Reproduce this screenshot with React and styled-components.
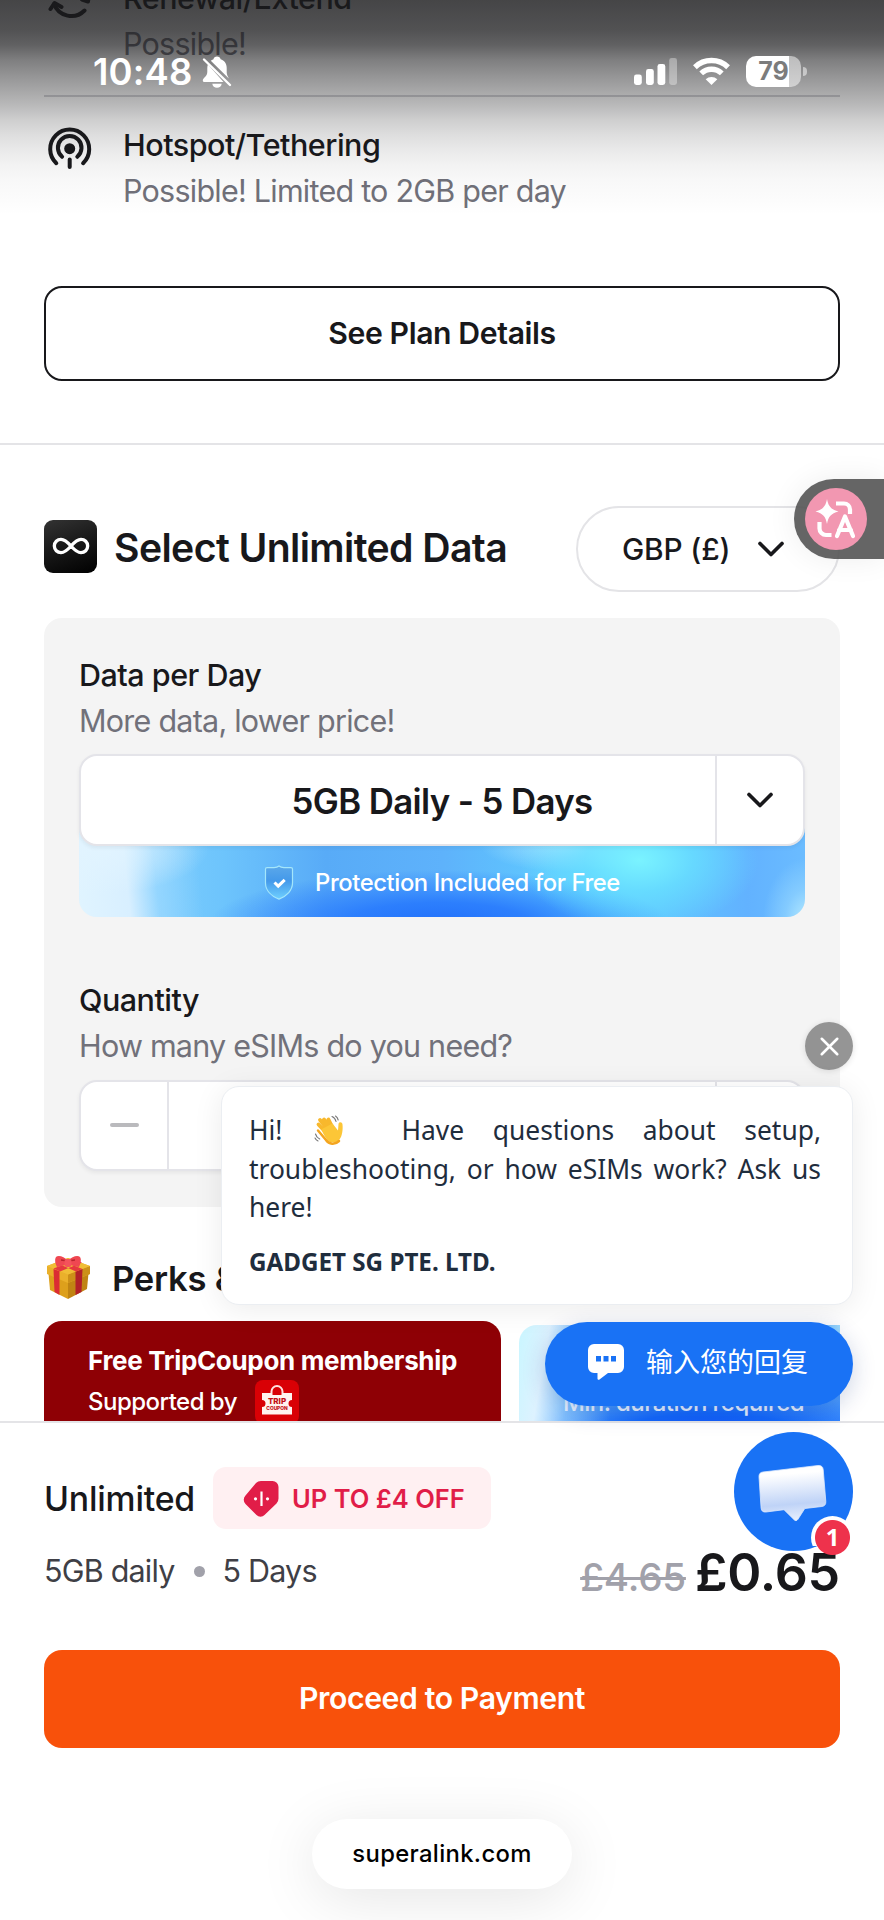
import React from 'react';
import styled, { createGlobalStyle } from 'styled-components';
import { ChevronDown, Infinity as InfinityIcon, X } from 'lucide-react';

const GlobalStyle = createGlobalStyle`
  *, *::before, *::after { box-sizing: border-box; }
  body {
    margin: 0;
    background: #fff;
    font-family: 'Inter', sans-serif;
    color: #18181b;
  }
  button { font-family: inherit; color: inherit; }
  svg { display: block; flex-shrink: 0; }
`;

const Page = styled.div`
  position: relative;
  width: 884px;
  height: 1920px;
  overflow: hidden;
  background: #fff;
`;

const Content = styled.main`
  height: 1421px;
  overflow: hidden;
`;

/* ---------- plan features ---------- */

const Features = styled.section`
  margin-top: -25px;
  padding: 0 44px 62px;
  border-bottom: 2px solid #e4e4e7;
`;

const Feature = styled.div`
  display: flex;
  gap: 27px;
  height: ${(p) => (p.$divider ? 122 : 117)}px;
  margin-bottom: ${(p) => (p.$divider ? 25 : 47)}px;
  border-bottom: ${(p) => (p.$divider ? '2px solid #d4d4d8' : 'none')};
`;

const Label = styled.div`
  font-size: 30.5px;
  line-height: 46px;
  font-weight: 500;
  letter-spacing: -0.5px;
  white-space: nowrap;
`;

const Hint = styled(Label)`
  font-weight: 400;
  letter-spacing: -0.76px;
  color: #71717a;
`;

const OutlineButton = styled.button`
  display: block;
  width: 100%;
  height: 95px;
  padding-bottom: 3px;
  border: 2px solid #18181b;
  border-radius: 18px;
  background: #fff;
  font-size: 30.2px;
  font-weight: 600;
  letter-spacing: -0.4px;
`;

/* ---------- data selector ---------- */

const Section = styled.section`
  padding: 61px 44px 0;
`;

const SectionHead = styled.div`
  display: flex;
  align-items: center;
  height: 86px;
  margin-bottom: 26px;
`;

const LogoTile = styled.div`
  display: flex;
  align-items: center;
  justify-content: center;
  width: 53px;
  height: 53px;
  margin: -6px 17px 0 0;
  border-radius: 9px;
  background: linear-gradient(160deg, #333 0%, #1a1a1a 45%, #000 100%);
  color: #fff;
`;

const SectionTitle = styled.h2`
  flex: 1;
  margin: 0;
  padding-bottom: 3px;
  font-size: 39.2px;
  font-weight: 600;
  letter-spacing: -0.6px;
  white-space: nowrap;
`;

const CurrencySelect = styled.button`
  display: flex;
  align-items: center;
  justify-content: space-between;
  width: 264px;
  height: 86px;
  padding: 0 45px 1px 44px;
  border: 2px solid #e4e4e7;
  border-radius: 43px;
  background: #fff;
  font-size: 29.8px;
  font-weight: 500;
  letter-spacing: -0.15px;
`;

const Panel = styled.div`
  height: 589px;
  padding: 34px 35px 36px;
  border-radius: 18px;
  background: #f4f4f4;
`;

const Control = styled.div`
  position: relative;
  display: grid;
  grid-template-columns: ${(p) => (p.$stepper ? '86px 1fr 88px' : '1fr 88px')};
  height: ${(p) => (p.$stepper ? 91 : 92)}px;
  margin-top: ${(p) => (p.$stepper ? 11 : 10)}px;
  border: 2px solid #e4e4e9;
  border-radius: 18px;
  background: #fff;
  box-shadow: 0 2px 4px rgba(0, 0, 0, 0.06);
`;

const Cell = styled.div`
  display: flex;
  align-items: center;
  justify-content: center;
  padding-left: ${(p) => p.$shift || 0}px;
  padding-top: ${(p) => (p.$shift ? 2 : 0)}px;
  font-size: 34.8px;
  font-weight: 600;
  letter-spacing: -0.62px;
  & + & { border-left: 2px solid #e4e4e9; }
`;

const MinusBar = styled.span`
  width: 29px;
  height: 4px;
  margin-top: -2px;
  border-radius: 2px;
  background: #bababd;
`;

const Banner = styled.div`
  display: flex;
  align-items: center;
  justify-content: center;
  gap: 21px;
  height: 91px;
  margin: -20px 0 60px;
  padding-top: 21px;
  border-radius: 0 0 18px 18px;
  background:
    radial-gradient(ellipse 44px 62px at 728px 94px, rgba(185,236,255,0.95), rgba(150,215,255,0.6) 50%, rgba(120,200,255,0) 100%),
    radial-gradient(ellipse 110px 46px at 20px 22px, rgba(226,244,255,0.9), rgba(200,235,255,0) 100%),
    linear-gradient(84deg, #e0f4ff 0%, #d8efff 7%, rgba(165,220,255,0.6) 11%, rgba(110,198,255,0) 17%),
    radial-gradient(ellipse 120px 70px at 560px 34px, rgba(122,243,255,1), rgba(105,228,255,0.7) 45%, rgba(90,210,255,0) 100%),
    radial-gradient(ellipse 90px 28px at 490px 18px, rgba(175,228,255,0.9), rgba(140,210,255,0) 100%),
    radial-gradient(ellipse 230px 54px at 360px 98px, #2170fb 0%, rgba(42,124,253,0.95) 40%, rgba(60,150,255,0) 100%),
    linear-gradient(90deg, #8cd6ff 0%, #6dc4fc 20%, #58abf7 34%, #5eb2fb 50%, #5fcaff 66%, #5fc4ff 80%, #62b2ff 92%, #6bbcff 100%);
  color: #fff;
  font-size: 23.8px;
  font-weight: 500;
  letter-spacing: -0.4px;
`;

const PerksHead = styled(SectionHead)`
  height: 53px;
  margin: 44px 0 17px;
  gap: 21px;
  padding-left: 2px;
`;

const PerksTitle = styled(SectionTitle)`
  padding: 0;
  font-size: 34.6px;
  letter-spacing: -0.25px;
`;

const PerkCards = styled.div`
  display: flex;
  gap: 18px;
`;

const CouponCard = styled.div`
  width: 457px;
  height: 140px;
  padding: 20px 44px;
  border-radius: 18px;
  background: #8e0005;
  color: #fff;
  font-size: 26px;
  font-weight: 700;
  line-height: 40px;
  letter-spacing: -0.33px;
  white-space: nowrap;
`;

const Supporter = styled.div`
  display: flex;
  align-items: center;
  gap: 18px;
  height: 44px;
  margin-top: -1px;
  font-size: 24px;
  font-weight: 500;
  letter-spacing: -0.52px;
`;

const BlueCard = styled.div`
  display: flex;
  flex: 1;
  height: 140px;
  margin-top: 4px;
  padding: 63px 0 0 44px;
  border-radius: 18px 0 0 0;
  background:
    linear-gradient(270deg, rgba(165,226,255,0.9), rgba(165,226,255,0) 12%) 0 0 / 100% 40px no-repeat,
    linear-gradient(100deg, #c9f6ff 0%, #ddf2ff 9%, rgba(150,205,255,0.7) 18%, rgba(90,165,255,0) 31%),
    radial-gradient(ellipse 190px 45px at 190px 108px, #0f50f8 0%, #1468fb 45%, rgba(30,120,255,0) 100%),
    linear-gradient(90deg, #68b9ff, #4c9cff);
  color: #e8f2ff;
  font-size: 24px;
  font-weight: 500;
  line-height: 30px;
  letter-spacing: -0.56px;
  white-space: nowrap;
`;

/* ---------- checkout bar ---------- */

const Checkout = styled.footer`
  height: 499px;
  padding: 44px 44px 0;
  border-top: 2px solid #e4e4e7;
  background: #fff;
`;

const PlanRow = styled.div`
  display: flex;
  align-items: center;
  gap: 18px;
  height: 62px;
  margin-bottom: 15px;
`;

const PlanName = styled.div`
  width: 151px;
  padding-top: 1px;
  font-size: 33.8px;
  font-weight: 500;
  letter-spacing: -0.2px;
`;

const Discount = styled.div`
  display: flex;
  align-items: center;
  gap: 12px;
  width: 278px;
  height: 62px;
  padding-left: 30px;
  border-radius: 13px;
  background: #fff0f2;
  color: #e11d48;
  font-size: 25.5px;
  font-weight: 600;
  white-space: nowrap;
`;

const PriceRow = styled.div`
  display: flex;
  justify-content: space-between;
  height: 106px;
`;

const PlanMeta = styled(Label)`
  display: flex;
  align-items: center;
  gap: 18px;
  height: 46px;
  margin-top: 4px;
  font-weight: 400;
  letter-spacing: -0.8px;
  color: #3f3f46;
`;

const Dot = styled.span`
  width: 11px;
  height: 11px;
  margin-left: 1px;
  border-radius: 50%;
  background: #a1a1aa;
`;

const Price = styled.div`
  display: flex;
  align-items: baseline;
  gap: 9px;
  height: 56px;
  font-size: 51.8px;
  line-height: 56px;
  font-weight: 600;
  letter-spacing: -0.2px;
`;

const OldPrice = styled.s`
  font-size: 38.6px;
  font-weight: 500;
  color: #a1a1aa;
`;

const PayButton = styled.button`
  display: block;
  width: 100%;
  height: 98px;
  margin-bottom: 71px;
  padding-bottom: 3px;
  border: none;
  border-radius: 18px;
  background: #f8510b;
  color: #fff;
  font-size: 30.2px;
  font-weight: 600;
  letter-spacing: -0.4px;
`;

const UrlPill = styled.div`
  width: 260px;
  height: 70px;
  margin: 0 auto;
  border-radius: 35px;
  background: #fff;
  box-shadow: 0 10px 60px rgba(0, 0, 0, 0.1);
  color: #000;
  font-size: 23.8px;
  font-weight: 500;
  line-height: 69px;
  letter-spacing: 0.35px;
  text-align: center;
`;

/* ---------- things floating over the page ---------- */

const StatusBar = styled.div`
  position: absolute;
  inset: 0 0 auto 0;
  display: flex;
  align-items: flex-start;
  height: 216px;
  padding: 50px 83px 0 93px;
  background: linear-gradient(180deg,
    rgba(26,26,28,0.81) 0, rgba(26,26,28,0.755) 30px, rgba(26,26,28,0.69) 45px,
    rgba(26,26,28,0.56) 60px, rgba(26,26,28,0.47) 75px, rgba(26,26,28,0.39) 90px,
    rgba(26,26,28,0.305) 105px, rgba(26,26,28,0.21) 120px, rgba(26,26,28,0.145) 135px,
    rgba(26,26,28,0.095) 150px, rgba(26,26,28,0.055) 165px, rgba(26,26,28,0.03) 180px,
    rgba(26,26,28,0) 215px);
  color: #fff;
`;

const Clock = styled.div`
  width: 109px;
  font-size: 36.4px;
  line-height: 44px;
  font-weight: 600;
  letter-spacing: 0.2px;
`;

const BellSlot = styled.div`
  padding-top: 6px;
`;

const StatusIcons = styled.div`
  display: flex;
  gap: 16px;
  margin: 6px 0 0 auto;
`;

const Battery = styled.div`
  position: relative;
  width: 55px;
  height: 31px;
  border-radius: 10px;
  background: linear-gradient(90deg, #fff 43px, rgba(255,255,255,0.5) 43px);
  color: #7c7c7c;
  font-size: 25px;
  line-height: 31px;
  font-weight: 700;
  text-align: center;
  &::after {
    content: '';
    position: absolute;
    left: 57px;
    top: 11px;
    width: 4px;
    height: 9px;
    border-radius: 0 5px 5px 0;
    background: rgba(255, 255, 255, 0.5);
  }
`;

const TranslateTab = styled.div`
  position: absolute;
  top: 479px;
  right: 0;
  width: 90px;
  height: 80px;
  padding: 9px 0 0 11px;
  border-radius: 40px 0 0 40px;
  background: rgba(80, 80, 80, 0.88);
  box-shadow: 0 0 30px rgba(0, 0, 0, 0.07);
`;

const CloseButton = styled.button`
  position: absolute;
  top: 1022px;
  left: 805px;
  display: flex;
  align-items: center;
  justify-content: center;
  width: 48px;
  height: 48px;
  padding: 0;
  border: none;
  border-radius: 50%;
  background: rgba(122, 122, 122, 0.8);
  box-shadow: 0 1px 6px rgba(0, 0, 0, 0.12);
  color: #fff;
`;

const ChatCard = styled.div`
  position: absolute;
  top: 1086px;
  left: 221px;
  width: 632px;
  height: 219px;
  padding: 24px 31px 0 27px;
  border: 1px solid #ebeef2;
  border-radius: 18px;
  background: #fff;
  box-shadow: 0 4px 30px rgba(0, 0, 0, 0.08);
  color: #1f2d3d;
  font-family: 'Noto Sans', sans-serif;
  font-size: 26.4px;
  line-height: 38px;
`;

const ChatLine = styled.div`
  display: flex;
  justify-content: space-between;
  height: ${(p) => p.$height || 38}px;
  white-space: nowrap;
`;

const WaveSlot = styled.span`
  padding: 4px 0 0 3px;
`;

const ChatSender = styled.div`
  margin-top: 17px;
  font-size: 24.2px;
  font-weight: 700;
`;

const ReplyPill = styled.button`
  position: absolute;
  top: 1322px;
  left: 545px;
  display: flex;
  align-items: center;
  gap: 22px;
  width: 308px;
  height: 84px;
  padding: 0 0 4px 43px;
  border: none;
  border-radius: 42px;
  background: #1972f5;
  box-shadow: 0 6px 24px rgba(0, 40, 120, 0.2);
  color: #fff;
`;

const ReplyText = styled.span`
  margin-top: -3px;
  font-family: 'Noto Sans', 'Noto Sans CJK SC', sans-serif;
  font-size: 27px;
`;

const ChatBubble = styled.div`
  position: absolute;
  top: 1432px;
  left: 734px;
  width: 119px;
  height: 119px;
  border-radius: 50%;
  background: #1972f5;
`;

const Unread = styled.div`
  position: absolute;
  top: 84px;
  left: 77px;
  width: 43px;
  height: 43px;
  border-radius: 50%;
  background: radial-gradient(circle, #ee324c 17px, transparent 18px),
    linear-gradient(180deg, #fff 30px, transparent 30px);
  color: #fff;
  font-family: 'Noto Sans', sans-serif;
  font-size: 24px;
  line-height: 41px;
  font-weight: 700;
  text-align: center;
`;

const RenewIcon = () => (
  <svg width="52" height="60" viewBox="0 0 52 60" fill="none" stroke="#18181b" strokeWidth="4" strokeLinecap="round" strokeLinejoin="round">
    <path d="M10 29a18.500 18.500 0 0 0 30.500 6.500M42 17a19 19 0 0 0-32-4" />
    <path d="M6.500 34l4-6 7 4M38 24.500l6 2 1-7" />
  </svg>
);

const HotspotIcon = () => (
  <svg width="52" height="60" viewBox="0 0 52 60" fill="none" stroke="#18181b" strokeWidth="4" strokeLinecap="round">
    <path d="M12.300 41.200a19.500 19.500 0 1 1 26.800 0" />
    <path d="M18.100 34.800a11.800 11.800 0 1 1 15.200 0" />
    <circle cx="25.700" cy="26.700" r="5.500" fill="#18181b" stroke="none" />
    <path d="M25.700 37.500v7.500" />
  </svg>
);

const BellOffIcon = () => (
  <svg width="30" height="32" viewBox="0 0 30 32" fill="#fff">
    <path d="M15 0.500c-1.900 0-3.200 1.100-3.500 2.700-1.100.3-2 .9-2.700 1.600L26.800 22.500c-.8-1.800-2.100-3.500-2.100-6.200v-4.500c0-4.500-2.500-7.600-6.100-8.600C18.200 1.600 16.900.5 15 .5z" />
    <path d="M6 8.500c-.5 1-.7 2.100-.7 3.400v4c0 4.700-4.500 5.800-4.500 8.500 0 1 .8 1.600 2 1.600h18.700z" />
    <path d="M10.300 27.800h9.400c-.3 2.400-2.200 4-4.700 4s-4.400-1.600-4.700-4z" />
    <path d="M2 3.500l26 25.500" stroke="#fff" strokeWidth="2.400" strokeLinecap="round" />
  </svg>
);

const SignalIcon = () => (
  <svg width="43" height="30" viewBox="0 0 43 30" fill="#fff">
    <rect x="0" y="18.500" width="7.800" height="10.500" rx="2.400" />
    <rect x="12" y="13" width="7.800" height="16" rx="2.400" />
    <rect x="23.500" y="8" width="7.800" height="21" rx="2.400" />
    <rect x="35.200" y="2" width="7.800" height="27" rx="2.400" opacity="0.35" />
  </svg>
);

const WifiIcon = () => (
  <svg width="37" height="30" viewBox="0 0 37 30" fill="none" stroke="#fff" strokeWidth="5.400">
    <path d="M1.900 11.200a24 24 0 0 1 33.200 0" />
    <path d="M8.200 17.400a15 15 0 0 1 20.600 0" />
    <path d="M18.500 29l-5.800-5.800a8.500 8.500 0 0 1 11.600 0z" fill="#fff" stroke="none" />
  </svg>
);

const TranslateIcon = () => (
  <svg width="62" height="62" viewBox="0 0 62 62" fill="none">
    <circle cx="31" cy="31" r="31" fill="#f297b1" />
    <path d="M22 11c1.300 7.300 4 10.500 11.500 12.500-7.500 2-10.200 5.200-11.500 12.500-1.300-7.300-4-10.500-11.500-12.500 7.500-2 10.200-5.200 11.500-12.500z" fill="#fff" />
    <path d="M31 15.500h8a6 6 0 0 1 6 6V26M14.500 34v6.500a6.500 6.500 0 0 0 6.500 6.500h5.500" stroke="#fff" strokeWidth="4.200" />
    <path d="M32 48l8-19.500L48 48M34 42h12" stroke="#fff" strokeWidth="4.200" strokeLinecap="round" strokeLinejoin="round" />
  </svg>
);

const ShieldIcon = () => (
  <svg width="30" height="35" viewBox="0 0 30 35">
    <defs>
      <linearGradient id="shield" x1="0" y1="0" x2="0" y2="1">
        <stop offset="0" stopColor="#5ba8ea" />
        <stop offset="0.450" stopColor="#4499ea" />
        <stop offset="1" stopColor="#6fd0ff" />
      </linearGradient>
    </defs>
    <path d="M15 1c1.500 1.300 3 1.600 5 1.600h7c1 0 1.500.5 1.500 1.500v14c0 7-5.500 13-13.500 16C7 31 1.500 25 1.500 18V4.100c0-1 .5-1.500 1.500-1.500h7c2 0 3.500-.3 5-1.600z" fill="url(#shield)" stroke="#a4e6fb" strokeWidth="1.200" />
    <path d="M10.500 17.500l3.700 3.600 6.500-6.300" fill="none" stroke="#fff" strokeWidth="3" />
  </svg>
);

const GiftIcon = () => (
  <svg width="45" height="45" viewBox="0 0 45 45">
    <path d="M2 13l20 9v22L4 35z" fill="#dda01c" />
    <path d="M43 13l-21 9v22l19-10z" fill="#c08413" />
    <path d="M1 11l21-8 22 8v8l-22 9-21-9z" fill="#eab02b" />
    <path d="M44 11l-22 8.500V28l22-9z" fill="#cc9018" />
    <path d="M1 11l21-8 22 8-22 8.500z" fill="#f0bd35" />
    <path d="M7.500 14l6 2.300V40L8.500 37z" fill="#db2c33" />
    <path d="M36.500 14l-7 2.700V40l6-3z" fill="#b32128" />
    <path d="M7.500 13.500L30 5l6 2.500L14 16.500zM36.500 14L14 5 9.500 7.500 30 16.500z" fill="#e5383f" />
    <path d="M22 6C18 1 12 0 10 2c-2 3 0 8 1 10 4-1 8-1 11-4 3 3 7 3 11 4 1-2 3-7 1-10-2-2-8-1-12 4z" fill="#ef4751" />
    <path d="M22 7c-3-2-5-2-7-2M22 7c3-2 5-2 7-2" stroke="#b8232c" strokeWidth="1.300" fill="none" />
    <rect x="18.500" y="4" width="7" height="8" rx="2.500" fill="#f4525b" />
  </svg>
);

const WaveIcon = () => (
  <svg width="30" height="31" viewBox="0 0 30 31" fill="none" strokeLinecap="round">
    <path d="M11 16.500L4.500 9.500M13.500 14L6 5M16 12L10 4.500M18.500 12.500L14.500 4.500" stroke="#f8b82c" strokeWidth="3.800" />
    <path d="M8 14l10.500-5.500 5.500 7 .5-6.500c.3-2.500 3.800-2.200 4 .5.500 5-.2 11.500-3 15-3.500 4-9.500 4-12.500 0-2-3-4.500-6-5.500-10.500z" fill="#fcc637" />
    <path d="M4 15.500l8 9.500c3 4.500 9 5 13 1" stroke="#f4a51f" strokeWidth="2.500" />
    <path d="M18 1.500c2.300.8 3.500 2.800 4 5M21.500 1c1.500.8 2.300 2.300 2.700 4M1.500 19c.5 2 2 4 4.200 5M1 23c.7 1.500 1.700 2.500 3 3" stroke="#777" strokeWidth="1.100" />
  </svg>
);

const TripLogo = styled.svg`
  text {
    font-family: 'Inter', sans-serif;
    font-weight: 800;
    letter-spacing: 0;
    fill: #c30d13;
    text-anchor: middle;
  }
`;

const TripCouponLogo = () => (
  <TripLogo width="44" height="44" viewBox="0 0 44 44">
    <rect width="44" height="44" rx="8" fill="#d90005" />
    <path d="M16.500 14v-2.500a5.500 5.500 0 0 1 11 0V14" fill="none" stroke="#ffe1df" strokeWidth="2" />
    <path d="M7 13h9l2 2h8l2-2h9v7a3.500 3.500 0 0 0 0 7v7.500H7V27a3.500 3.500 0 0 0 0-7z" fill="#fff3ef" />
    <text x="22" y="24" fontSize="8">TRIP</text>
    <text x="22" y="29.500" fontSize="4.800">COUPON</text>
  </TripLogo>
);

const TagIcon = () => (
  <svg width="37" height="37" viewBox="0 0 37 37">
    <path d="M18 1h11.500a6 6 0 0 1 6 6v11.500a7 7 0 0 1-2 5L21.500 35a5.500 5.500 0 0 1-8 0L2.500 24a6 6 0 0 1 0-8.500L13 3a7 7 0 0 1 5-2z" fill="#e11d48" />
    <path d="M18.500 11.500V26" stroke="#fff" strokeWidth="2.200" />
    <circle cx="12.500" cy="18.800" r="1.600" fill="#fff" />
    <circle cx="24.500" cy="18.800" r="1.600" fill="#fff" />
  </svg>
);

const TypingIcon = () => (
  <svg width="36" height="36" viewBox="0 0 36 36">
    <path d="M6 0h24a6 6 0 0 1 6 6v17a6 6 0 0 1-6 6H20l-8.500 6.500c-1 .7-2 .2-2-1V29H6a6 6 0 0 1-6-6V6a6 6 0 0 1 6-6z" fill="#fff" />
    <path d="M8 12h5v5.500H8zM15.500 12h5v5.500h-5zM23 12h5v5.500h-5z" fill="#1972f5" />
  </svg>
);

const MessageIcon = () => (
  <svg width="119" height="119" viewBox="0 0 119 119">
    <defs>
      <linearGradient id="msg" x1="0.450" y1="0" x2="0.550" y2="1">
        <stop offset="0.150" stopColor="#fff" />
        <stop offset="0.700" stopColor="#bfd3f7" />
        <stop offset="1" stopColor="#e9f0fd" />
      </linearGradient>
    </defs>
    <path d="M29 40l55-6.500c3-.3 5 1.200 5.200 4l2.600 32c.2 3-1.200 4.700-4 5l-17 2-7 11c-1 1.500-2.500 1.500-3.700.2L50 77.700 32 80c-3 .3-4.600-1-4.900-4L25 45c-.2-3 1.200-4.700 4-5z" fill="url(#msg)" stroke="#dce8fd" strokeWidth="0.800" />
  </svg>
);

export default function App() {
  return (
    <>
      <GlobalStyle />
      <Page>
        <Content>
          <Features>
            <Feature $divider>
              <RenewIcon />
              <div>
                <Label>Renewal/Extend</Label>
                <Hint>Possible!</Hint>
              </div>
            </Feature>
            <Feature>
              <HotspotIcon />
              <div>
                <Label>Hotspot/Tethering</Label>
                <Hint>Possible! Limited to 2GB per day</Hint>
              </div>
            </Feature>
            <OutlineButton>See Plan Details</OutlineButton>
          </Features>

          <Section>
            <SectionHead>
              <LogoTile><InfinityIcon size={40} strokeWidth={2} /></LogoTile>
              <SectionTitle>Select Unlimited Data</SectionTitle>
              <CurrencySelect>
                GBP (£)
                <ChevronDown size={44} />
              </CurrencySelect>
            </SectionHead>

            <Panel>
              <Label>Data per Day</Label>
              <Hint>More data, lower price!</Hint>
              <Control>
                <Cell $shift={88}>5GB Daily - 5 Days</Cell>
                <Cell><ChevronDown size={44} /></Cell>
              </Control>
              <Banner>
                <ShieldIcon />
                Protection Included for Free
              </Banner>
              <Label>Quantity</Label>
              <Hint>How many eSIMs do you need?</Hint>
              <Control $stepper>
                <Cell><MinusBar /></Cell>
                <Cell />
                <Cell />
              </Control>
            </Panel>

            <PerksHead>
              <GiftIcon />
              <PerksTitle>Perks &amp;</PerksTitle>
            </PerksHead>
            <PerkCards>
              <CouponCard>
                Free TripCoupon membership
                <Supporter>
                  Supported by
                  <TripCouponLogo />
                </Supporter>
              </CouponCard>
              <BlueCard>Min. duration required</BlueCard>
            </PerkCards>
          </Section>
        </Content>

        <Checkout>
          <PlanRow>
            <PlanName>Unlimited</PlanName>
            <Discount>
              <TagIcon />
              UP TO £4 OFF
            </Discount>
          </PlanRow>
          <PriceRow>
            <PlanMeta>
              5GB daily
              <Dot />
              5 Days
            </PlanMeta>
            <Price>
              <OldPrice>£4.65</OldPrice>
              £0.65
            </Price>
          </PriceRow>
          <PayButton>Proceed to Payment</PayButton>
          <UrlPill>superalink.com</UrlPill>
        </Checkout>

        <StatusBar>
          <Clock>10:48</Clock>
          <BellSlot><BellOffIcon /></BellSlot>
          <StatusIcons>
            <SignalIcon />
            <WifiIcon />
            <Battery>79</Battery>
          </StatusIcons>
        </StatusBar>

        <TranslateTab><TranslateIcon /></TranslateTab>

        <CloseButton aria-label="Close"><X size={31} strokeWidth={2} /></CloseButton>
        <ChatCard>
          <ChatLine $height={39}>
            <span>Hi!</span>
            <WaveSlot><WaveIcon /></WaveSlot>
            <span />
            <span>Have</span>
            <span>questions</span>
            <span>about</span>
            <span>setup,</span>
          </ChatLine>
          <ChatLine>
            {'troubleshooting, or how eSIMs work? Ask us'.split(' ').map((word) => (
              <span key={word}>{word}</span>
            ))}
          </ChatLine>
          <ChatLine>here!</ChatLine>
          <ChatSender>GADGET SG PTE. LTD.</ChatSender>
        </ChatCard>
        <ReplyPill>
          <TypingIcon />
          <ReplyText>输入您的回复</ReplyText>
        </ReplyPill>
        <ChatBubble>
          <MessageIcon />
          <Unread>1</Unread>
        </ChatBubble>
      </Page>
    </>
  );
}
